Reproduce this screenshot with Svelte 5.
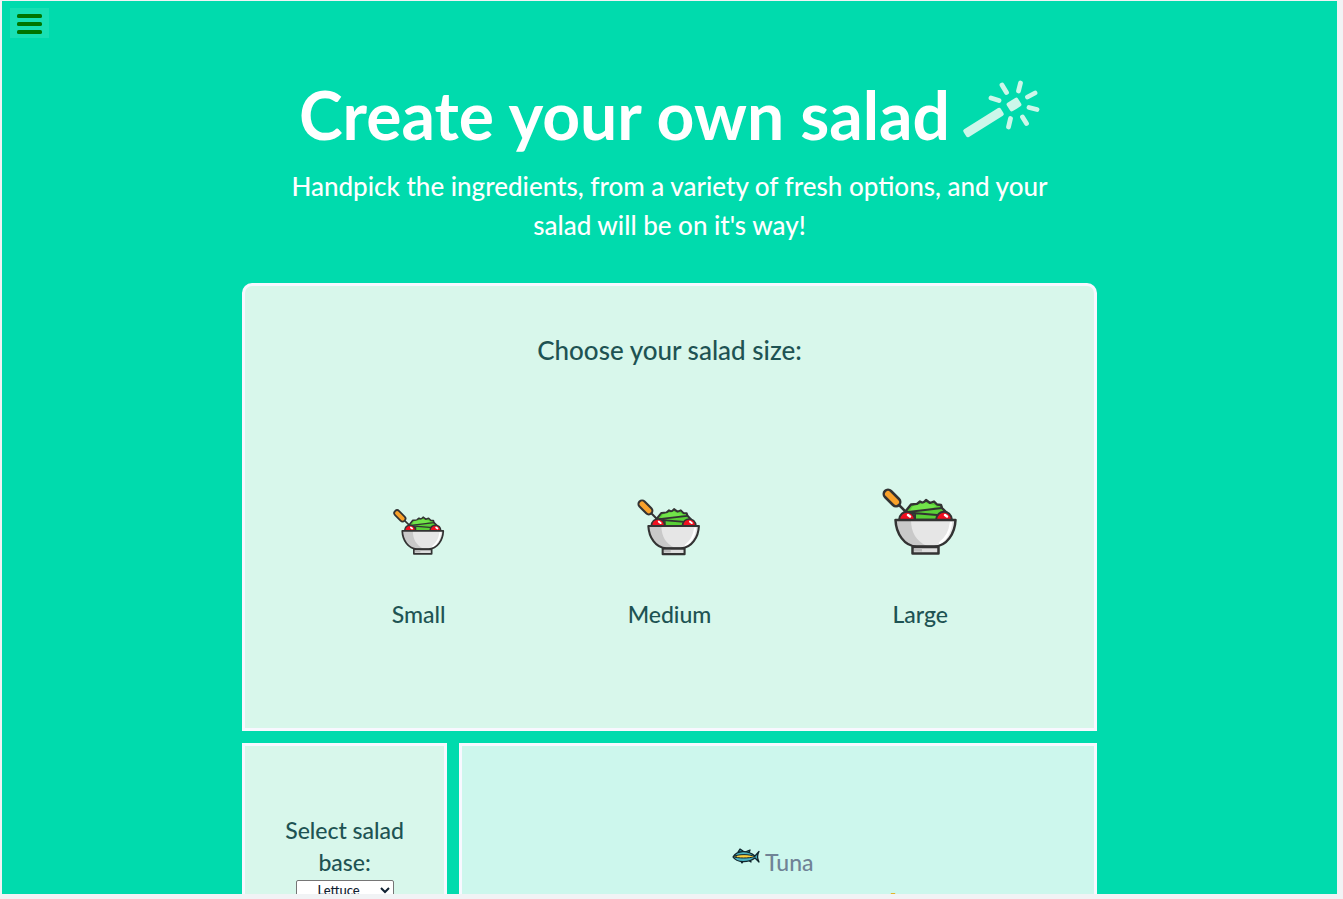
<script>
  const sizes = [
    { name: 'Small', width: 52 },
    { name: 'Medium', width: 64 },
    { name: 'Large', width: 76 }
  ];
  let size = $state('');
  let base = $state('Lettuce');
  let tuna = $state(false);
</script>

<div class="frame">
  <div class="page">
    <button class="menu" aria-label="Menu">
      <svg width="25" height="20" viewBox="0 0 25 20">
        <g fill="#007500">
          <rect width="25" height="4" rx="1.6" />
          <rect y="8" width="25" height="4" rx="1.6" />
          <rect y="16" width="25" height="4" rx="1.6" />
        </g>
      </svg>
    </button>

    <header>
      <h1>
        Create your own salad
        <svg class="wand" width="78" height="60" viewBox="0 0 78 60" aria-hidden="true">
          <g fill="#ccf7ea">
            <rect x="-22" y="-4.5" width="44" height="9" rx="2" transform="translate(21.5 43.5) rotate(-32)" />
            <rect x="-6.5" y="-5" width="13" height="10" rx="2" transform="translate(52 25.5) rotate(-32)" />
          </g>
          <g stroke="#ccf7ea" stroke-width="4.8" stroke-linecap="round">
            <path d="M40 6L44.5 13.500M58.500 4L56.500 12M29 19L37 21.500M65.500 18L73 14M67 28.500L75 30.500M60.500 38L64.500 44.500M48.500 39.500L46.500 48" />
          </g>
        </svg>
      </h1>
      <p>Handpick the ingredients, from a variety of fresh options, and your salad will be on it's way!</p>
    </header>

    <main>
      <section class="card sizes">
        <h2>Choose your salad size:</h2>
        <div class="options">
          {#each sizes as item}
            <label>
              <input type="radio" name="size" value={item.name} bind:group={size} />
              <svg width={item.width} viewBox="0 0 76 68" aria-hidden="true">
                <g stroke-linecap="round" stroke-linejoin="round">
                  <path d="M15 15L24 24" stroke="#333" stroke-width="2.500" />
                  <path d="M6 6L14 14" stroke="#333" stroke-width="11" />
                  <path d="M6 6L14 14" stroke="#f9a12b" stroke-width="6" />
                  <path d="M23 24L29 16.500L35 16L38 13.500L41 15L44 12L48 15L52 13.500L55 16.500L59 17L60 20L64 24L65 32H22Z" fill="#59cf36" stroke="#333" stroke-width="2.400" />
                  <path d="M31 18L43 15L55 18L45 22L27 24Z" fill="#72e44a" />
                  <path d="M26 24L60 20M31 25L67 28M33 26V31" fill="none" stroke="#333" stroke-width="2" />
                  <path d="M17 32C18 21 32 21 33 32ZM54 32C55 21 69 21 70 32Z" fill="#f01020" stroke="#333" stroke-width="2" />
                  <path d="M26 27L28 28.500M63 27L65 28.500" stroke="#fff" stroke-width="2.500" />
                  <path d="M13.500 32H73.500C73 45 65 58.500 52 58.500H35C22 58.500 14 45 13.500 32Z" fill="#e6e6e6" />
                  <path d="M14 32H29C29 44 34 53 45 58H35C23 58 14 46 14 32Z" fill="#c9c9c9" />
                  <path d="M69 35C68 43 65 50 58 55" fill="none" stroke="#fff" stroke-width="2.500" />
                  <path d="M13.500 32H73.500C73 45 65 58.500 52 58.500H35C22 58.500 14 45 13.500 32Z" fill="none" stroke="#333" stroke-width="2.500" />
                  <path d="M30.500 59H56.500V65.500H30.500Z" fill="#dedede" stroke="#333" stroke-width="2.500" />
                  <path d="M32 62H40" stroke="#bbb" stroke-width="3" stroke-linecap="butt" />
                </g>
              </svg>
              <span>{item.name}</span>
            </label>
          {/each}
        </div>
      </section>

      <section class="card base">
        <label for="base">Select salad base:</label>
        <select id="base" bind:value={base}>
          <option>Lettuce</option>
        </select>
      </section>

      <section class="card extras">
        <label>
          <input type="checkbox" bind:checked={tuna} />
          <svg width="28" height="17" viewBox="0 0 28 17" aria-hidden="true">
            <g stroke="#10252c" stroke-width="1.300" stroke-linejoin="round">
              <path d="M6 4L8 1L11 3L13 4L18 2L17 5ZM8 12L10 15L12 12M16 12L19 14L18 11" fill="#258da6" />
              <path d="M1 9C5 2 16 2 23 8L27 3.500C25 7 25 10 27 14L23 10C16 15 5 15 1 9Z" fill="#49b2c2" />
              <path d="M1 8.500C7 6 17 6 23 8.500C17 10.500 6 10.500 1 8.500Z" fill="#ffd13c" stroke-width="1" />
            </g>
            <path d="M4 7V10" stroke="#10252c" />
          </svg>
          <span>Tuna</span>
        </label>
        <svg class="topping" width="28" height="20" viewBox="0 0 28 20" aria-hidden="true">
          <path d="M12 0H16L24 20H4Z" fill="#e3b62c" />
        </svg>
      </section>
    </main>
  </div>
</div>

<style>
  :global(body) {
    margin: 0;
    background: #f1f3f5;
  }
  .frame {
    box-sizing: border-box;
    height: 100vh;
    padding: 1px 6px 5px 2px;
    font-family: Lato, sans-serif;
    font-weight: 500;
  }
  .page {
    position: relative;
    height: 100%;
    overflow: hidden;
    background: #00dbad;
  }
  .menu {
    position: absolute;
    top: 7px;
    left: 8px;
    display: flex;
    padding: 6px 7px 4px;
    border: 0;
    background: #17e0b4;
  }
  header {
    width: 58%;
    margin: 0 auto;
    padding-top: 66px;
    color: #fff;
    text-align: center;
  }
  h1 {
    display: flex;
    justify-content: center;
    align-items: center;
    gap: 12px;
    margin: 0;
    font-size: 66px;
    line-height: 96px;
    font-weight: 700;
    white-space: nowrap;
  }
  .wand {
    flex: none;
    margin-bottom: 12px;
  }
  header p {
    margin: 4px 0 0;
    font-size: 26px;
    line-height: 39px;
    font-weight: 500;
  }
  main {
    display: grid;
    grid-template-columns: repeat(4, 1fr);
    grid-auto-rows: minmax(448px, auto);
    gap: 12px;
    width: 64%;
    margin: 38px auto 0;
  }
  .card {
    box-sizing: border-box;
    border: 3px solid #f8f8ff;
    background: #d8f7eb;
    color: #1e5353;
  }
  .sizes {
    grid-column: 1 / -1;
    padding: 44px 48px;
    border-radius: 10px 10px 0 0;
    text-align: center;
  }
  h2 {
    margin: 0;
    font-size: 26px;
    line-height: 40px;
    font-weight: 500;
  }
  .options {
    display: grid;
    grid-template-columns: repeat(3, 1fr);
    align-items: end;
    margin-top: 118px;
  }
  .options label {
    display: flex;
    flex-direction: column;
    align-items: center;
    gap: 42px;
  }
  span, .base label {
    font-size: 23px;
    line-height: 32px;
  }
  input {
    position: absolute;
    opacity: 0;
    pointer-events: none;
  }
  .base {
    display: flex;
    flex-direction: column;
    align-items: center;
    gap: 2px;
    padding: 68px 32px;
    text-align: center;
  }
  select {
    width: 98px;
    height: 20px;
    border: 1px solid #767676;
    border-radius: 2px;
    background: #fff;
    color: #123;
    font: 500 13px Lato, sans-serif;
    text-align: center;
    text-align-last: center;
  }
  .extras {
    grid-column: span 3;
    display: flex;
    flex-direction: column;
    align-items: center;
    padding: 100px 10px 0 0;
    background: #cdf7ed;
    color: #708396;
  }
  .extras label {
    display: flex;
    align-items: center;
    gap: 5px;
  }
  .extras label svg {
    margin-bottom: 12px;
  }
  .topping {
    margin: 15px 0 0 240px;
  }
</style>
